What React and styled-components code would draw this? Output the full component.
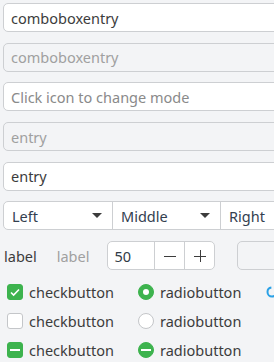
import React from 'react'
import styled, { createGlobalStyle } from 'styled-components'

const color = {
  bg: '#f3f4f6',
  border: '#cdcfd2',
  text: '#3c3c3c',
  dim: '#a0a0a0',
  green: '#3db34e',
  blue: '#2aa1e6',
}

const Global = createGlobalStyle`
  html, body {
    margin: 0;
    background: ${color.bg};
    overflow: hidden;
  }
  body {
    font-family: "Noto Sans", "Open Sans", sans-serif;
    font-size: 14.5px;
    color: ${color.text};
  }
`

const Page = styled.div`
  width: 340px;
  padding: 3px 0 0 3px;
  display: flex;
  flex-direction: column;
  gap: 10.7px;
`

const Entry = styled.div`
  height: 29px;
  box-sizing: border-box;
  display: flex;
  align-items: center;
  padding: 0 7px;
  border: 1px solid ${color.border};
  border-radius: 5px;
  background: ${({ $disabled }) => ($disabled ? color.bg : '#fff')};
  color: ${({ $disabled, $placeholder }) =>
    $disabled ? color.dim : $placeholder ? '#8a8a8a' : color.text};
`

const Combo = styled.div`
  height: 29px;
  box-sizing: border-box;
  display: flex;
  border: 1px solid ${color.border};
  border-radius: 5px;
  background: #fff;
`

const ComboPart = styled.div`
  width: 108px;
  box-sizing: border-box;
  display: flex;
  align-items: center;
  justify-content: space-between;
  padding: 0 10px 0 8px;
  color: #33404f;
  & + & {
    border-left: 1px solid ${color.border};
  }
`

const Arrow = styled.span`
  width: 0;
  height: 0;
  border-left: 5px solid transparent;
  border-right: 5px solid transparent;
  border-top: 5px solid #3c3c3c;
`

const SpinRow = styled.div`
  display: flex;
  align-items: center;
  height: 29px;
`

const Label = styled.span`
  color: ${({ $disabled }) => ($disabled ? color.dim : color.text)};
  margin-right: ${({ $gap }) => $gap}px;
  padding-left: 1px;
`

const Spin = styled.div`
  display: flex;
  height: 29px;
  box-sizing: border-box;
  border: 1px solid ${color.border};
  border-radius: 5px;
  background: ${({ $disabled }) => ($disabled ? color.bg : '#fff')};
  margin-right: 22px;
`

const SpinValue = styled.div`
  width: 40px;
  display: flex;
  align-items: center;
  padding-left: 6px;
  color: #2f3a46;
`

const SpinButton = styled.div`
  width: 29px;
  border-left: 1px solid ${color.border};
  display: flex;
  align-items: center;
  justify-content: center;
`

const Grid = styled.div`
  display: grid;
  grid-template-columns: 131px 128px 40px;
  row-gap: 9px;
  margin-top: 1px;
  padding-left: 4px;
`

const Item = styled.div`
  display: flex;
  align-items: center;
  gap: 6px;
  height: 20px;
`

const Box = styled.span`
  width: 16px;
  height: 16px;
  box-sizing: border-box;
  border-radius: ${({ $round }) => ($round ? '50%' : '3px')};
  display: flex;
  align-items: center;
  justify-content: center;
  background: ${({ $on }) => ($on ? color.green : '#fff')};
  border: 1px solid ${({ $on }) => ($on ? color.green : '#c4c6c9')};
`

const Dot = styled.span`
  width: 6px;
  height: 6px;
  border-radius: 50%;
  background: #fff;
`

const Dash = styled.span`
  width: 10px;
  height: 2px;
  background: #fff;
`

function Minus() {
  return (
    <svg width="14" height="14" viewBox="0 0 14 14">
      <path d="M1 7.5h12" stroke="#3c3c3c" strokeWidth="1" />
    </svg>
  )
}

function Plus() {
  return (
    <svg width="14" height="14" viewBox="0 0 14 14">
      <path d="M1 7.5h12M7.5 1v12" stroke="#3c3c3c" strokeWidth="1" />
    </svg>
  )
}

function Check() {
  return (
    <svg width="12" height="12" viewBox="0 0 12 12">
      <path d="M2 6.5l2.6 2.6L10 3.5" stroke="#fff" strokeWidth="1.6" fill="none" />
    </svg>
  )
}

function Spinner() {
  return (
    <svg width="12" height="12" viewBox="0 0 12 12">
      <circle cx="6" cy="6" r="4.5" stroke={color.blue} strokeWidth="2" fill="none"
        strokeDasharray="20 8.3" />
    </svg>
  )
}

export default function App() {
  return (
    <>
      <Global />
      <Page>
        <Entry>comboboxentry</Entry>
        <Entry $disabled>comboboxentry</Entry>
        <Entry $placeholder>Click icon to change mode</Entry>
        <Entry $disabled>entry</Entry>
        <Entry>entry</Entry>
        <Combo>
          <ComboPart>Left <Arrow /></ComboPart>
          <ComboPart>Middle <Arrow /></ComboPart>
          <ComboPart>Right <Arrow /></ComboPart>
        </Combo>
        <SpinRow>
          <Label $gap={19}>label</Label>
          <Label $disabled $gap={18}>label</Label>
          <Spin>
            <SpinValue>50</SpinValue>
            <SpinButton><Minus /></SpinButton>
            <SpinButton><Plus /></SpinButton>
          </Spin>
          <Spin $disabled>
            <SpinValue />
            <SpinButton />
          </Spin>
        </SpinRow>
        <Grid>
          <Item><Box $on><Check /></Box>checkbutton</Item>
          <Item><Box $on $round><Dot /></Box>radiobutton</Item>
          <Item><Spinner /></Item>
          <Item><Box />checkbutton</Item>
          <Item><Box $round />radiobutton</Item>
          <Item />
          <Item><Box $on><Dash /></Box>checkbutton</Item>
          <Item><Box $on $round><Dash /></Box>radiobutton</Item>
          <Item />
        </Grid>
      </Page>
    </>
  )
}
